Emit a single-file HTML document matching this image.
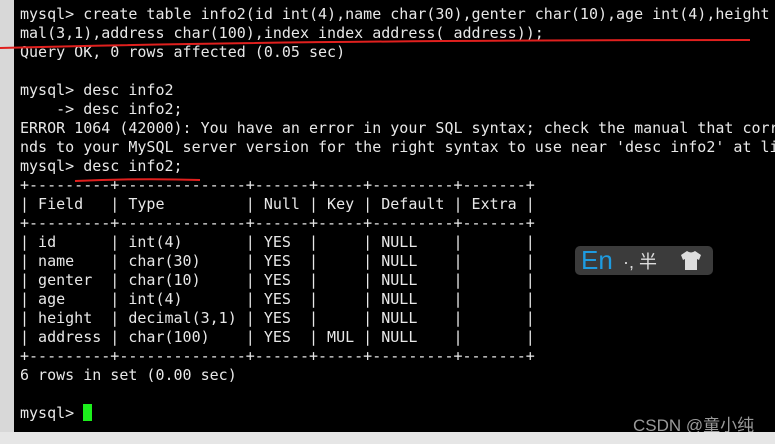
<!DOCTYPE html><html><head><meta charset="utf-8"><style>
body{margin:0;width:775px;height:444px;overflow:hidden;background:#d8d8d8;position:relative}
#t{position:absolute;left:14px;top:0;width:761px;height:432px;background:#000}
pre{position:absolute;left:20px;top:5px;margin:0;font:15px/19px "DejaVu Sans Mono","Liberation Mono",monospace;color:#e8e8e8;white-space:pre;letter-spacing:0}
.cur{display:inline-block;width:9px;height:17px;background:#1cf01c;vertical-align:-3px}
#sb{position:absolute;left:0;top:432px;width:775px;height:12px;background:#e6e6e6}
#ime{position:absolute;left:575px;top:246px;width:138px;height:29px;background:#3b3b3b;border-radius:5px;font-family:"Liberation Sans","Noto Sans CJK SC",sans-serif}
#wm{position:absolute;left:633px;top:411px;color:#9a9a9a;font:17px "Liberation Sans","Noto Sans CJK SC",sans-serif}
</style></head><body>
<div id="t"></div>
<pre>mysql&gt; create table info2(id int(4),name char(30),genter char(10),age int(4),height
mal(3,1),address char(100),index index_address( address));
Query OK, 0 rows affected (0.05 sec)

mysql&gt; desc info2
    -&gt; desc info2;
ERROR 1064 (42000): You have an error in your SQL syntax; check the manual that corr
nds to your MySQL server version for the right syntax to use near 'desc info2' at li
mysql&gt; desc info2;
+---------+--------------+------+-----+---------+-------+
| Field   | Type         | Null | Key | Default | Extra |
+---------+--------------+------+-----+---------+-------+
| id      | int(4)       | YES  |     | NULL    |       |
| name    | char(30)     | YES  |     | NULL    |       |
| genter  | char(10)     | YES  |     | NULL    |       |
| age     | int(4)       | YES  |     | NULL    |       |
| height  | decimal(3,1) | YES  |     | NULL    |       |
| address | char(100)    | YES  | MUL | NULL    |       |
+---------+--------------+------+-----+---------+-------+
6 rows in set (0.00 sec)

mysql&gt; <span class="cur"></span></pre>
<svg style="position:absolute;left:0;top:0" width="775" height="200"><path d="M0 48 Q300 40 750 40" stroke="#e0201e" stroke-width="2" fill="none"/><path d="M75 181 Q140 178 200 180" stroke="#e0201e" stroke-width="2" fill="none"/></svg>
<div id="ime"><span style="position:absolute;left:6px;top:-1px;font-size:26px;color:#1e9be0">En</span><span style="position:absolute;left:48px;top:2px;font-size:18px;color:#ddd">·, 半</span><svg style="position:absolute;left:106px;top:5px" width="20" height="19"><path d="M6 0 L0 4 L2 9 L4 8 L4 19 L16 19 L16 8 L18 9 L20 4 L14 0 Q10 3 6 0Z" fill="#ddd"/></svg></div>
<div id="wm">CSDN @童小纯</div>
<div id="sb"></div>
</body></html>
